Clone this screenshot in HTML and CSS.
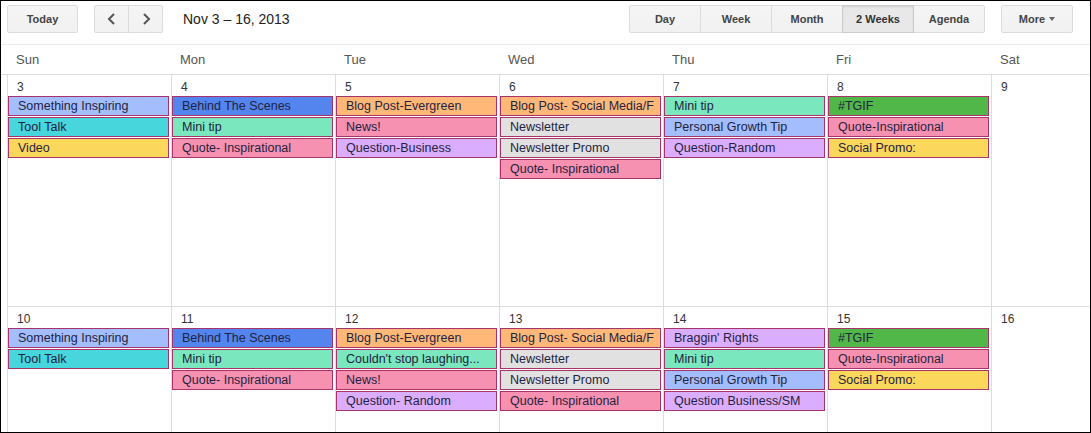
FILE: index.html
```html
<!DOCTYPE html>
<html lang="en">
<head>
    <meta charset="UTF-8">
    <title>Calendar - 2 Weeks</title>
    <link rel="stylesheet" href="styles.css">
</head>
<body>
    <div class="frame">
        <div class="toolbar">
            <button class="btn today">Today</button>
            <div class="btn-group nav">
                <button class="btn">
                    <svg width="10" height="14" viewBox="0 0 10 14"><polyline points="7,2 2,7 7,12" /></svg>
                </button>
                <button class="btn">
                    <svg width="10" height="14" viewBox="0 0 10 14"><polyline points="3,2 8,7 3,12" /></svg>
                </button>
            </div>
            <div class="range">Nov 3 &ndash; 16, 2013</div>
            <div class="spacer"></div>
            <div class="btn-group views">
                <button class="btn">Day</button>
                <button class="btn">Week</button>
                <button class="btn">Month</button>
                <button class="btn active">2 Weeks</button>
                <button class="btn">Agenda</button>
            </div>
            <button class="btn more">More <span class="caret"></span></button>
        </div>

        <div class="dayhead">
            <div>Sun</div><div>Mon</div><div>Tue</div><div>Wed</div><div>Thu</div><div>Fri</div><div>Sat</div>
        </div>

        <div class="week">
            <div class="cell">
                <div class="num">3</div>
                <div class="ev periwinkle">Something Inspiring</div>
                <div class="ev cyan">Tool Talk</div>
                <div class="ev yellow">Video</div>
            </div>
            <div class="cell">
                <div class="num">4</div>
                <div class="ev blue">Behind The Scenes</div>
                <div class="ev mint">Mini tip</div>
                <div class="ev pink">Quote- Inspirational</div>
            </div>
            <div class="cell">
                <div class="num">5</div>
                <div class="ev orange">Blog Post-Evergreen</div>
                <div class="ev pink">News!</div>
                <div class="ev purple">Question-Business</div>
            </div>
            <div class="cell">
                <div class="num">6</div>
                <div class="ev orange">Blog Post- Social Media/F</div>
                <div class="ev gray">Newsletter</div>
                <div class="ev gray">Newsletter Promo</div>
                <div class="ev pink">Quote- Inspirational</div>
            </div>
            <div class="cell">
                <div class="num">7</div>
                <div class="ev mint">Mini tip</div>
                <div class="ev periwinkle">Personal Growth Tip</div>
                <div class="ev purple">Question-Random</div>
            </div>
            <div class="cell">
                <div class="num">8</div>
                <div class="ev green">#TGIF</div>
                <div class="ev pink">Quote-Inspirational</div>
                <div class="ev yellow">Social Promo:</div>
            </div>
            <div class="cell">
                <div class="num">9</div>
            </div>
        </div>

        <div class="week">
            <div class="cell">
                <div class="num">10</div>
                <div class="ev periwinkle">Something Inspiring</div>
                <div class="ev cyan">Tool Talk</div>
            </div>
            <div class="cell">
                <div class="num">11</div>
                <div class="ev blue">Behind The Scenes</div>
                <div class="ev mint">Mini tip</div>
                <div class="ev pink">Quote- Inspirational</div>
            </div>
            <div class="cell">
                <div class="num">12</div>
                <div class="ev orange">Blog Post-Evergreen</div>
                <div class="ev mint">Couldn't stop laughing...</div>
                <div class="ev pink">News!</div>
                <div class="ev purple">Question- Random</div>
            </div>
            <div class="cell">
                <div class="num">13</div>
                <div class="ev orange">Blog Post- Social Media/F</div>
                <div class="ev gray">Newsletter</div>
                <div class="ev gray">Newsletter Promo</div>
                <div class="ev pink">Quote- Inspirational</div>
            </div>
            <div class="cell">
                <div class="num">14</div>
                <div class="ev purple">Braggin' Rights</div>
                <div class="ev mint">Mini tip</div>
                <div class="ev periwinkle">Personal Growth Tip</div>
                <div class="ev purple">Question Business/SM</div>
            </div>
            <div class="cell">
                <div class="num">15</div>
                <div class="ev green">#TGIF</div>
                <div class="ev pink">Quote-Inspirational</div>
                <div class="ev yellow">Social Promo:</div>
            </div>
            <div class="cell">
                <div class="num">16</div>
            </div>
        </div>
    </div>
</body>
</html>
```

FILE: styles.css
```css
body {
    margin: 0;
    font-family: "Liberation Sans", Arial, sans-serif;
    background-color: #fff;
    color: #222;
}

.frame {
    width: 1091px;
    height: 433px;
    box-sizing: border-box;
    border: 1px solid #000;
    overflow: hidden;
}

/* top bar */
.toolbar {
    display: flex;
    align-items: flex-start;
    height: 43px;
    padding: 4px 17px 0 6px;
    box-sizing: border-box;
}

.btn {
    height: 28px;
    padding: 0;
    border: 1px solid #dcdcdc;
    border-radius: 2px;
    background: linear-gradient(#f5f5f5, #f1f1f1);
    font-family: "Liberation Sans", Arial, sans-serif;
    font-size: 11px;
    font-weight: bold;
    color: #444;
    display: flex;
    align-items: center;
    justify-content: center;
}

.today {
    width: 71px;
}

.btn-group {
    display: flex;
}

.btn-group .btn {
    border-radius: 0;
    margin-left: -1px;
}

.btn-group .btn:first-child {
    border-radius: 2px 0 0 2px;
    margin-left: 0;
}

.btn-group .btn:last-child {
    border-radius: 0 2px 2px 0;
}

.nav {
    margin-left: 16px;
}

.nav .btn {
    width: 35px;
}

.nav svg polyline {
    fill: none;
    stroke: #555;
    stroke-width: 2;
}

.range {
    margin-left: 20px;
    font-size: 14px;
    line-height: 28px;
    color: #222;
}

.spacer {
    flex: 1;
}

.views .btn {
    width: 72px;
}

.views .btn.active {
    background: #e8e8e8;
    border-color: #ccc;
    color: #333;
    box-shadow: inset 0 1px 2px rgba(0, 0, 0, 0.1);
    position: relative;
}

.more {
    width: 72px;
    margin-left: 16px;
}

.caret {
    display: inline-block;
    margin-left: 4px;
    border-left: 3px solid transparent;
    border-right: 3px solid transparent;
    border-top: 4px solid #666;
}

/* grid */
.dayhead,
.week {
    display: grid;
    grid-template-columns: repeat(7, 164px);
    margin-left: 6px;
}

.dayhead {
    height: 31px;
    border-top: 1px solid #ebebeb;
    border-bottom: 1px solid #ddd;
    box-sizing: border-box;
    margin-left: 0;
    padding-left: 6px;
    width: 1200px;
}

.dayhead div {
    padding-left: 9px;
    font-size: 13px;
    line-height: 30px;
    color: #555;
}

.week {
    height: 231px;
    border-bottom: 1px solid #ddd;
}

.cell {
    border-left: 1px solid #ddd;
    padding-right: 2px;
    min-width: 0;
}

.num {
    height: 21px;
    line-height: 24px;
    padding-left: 9px;
    font-size: 12px;
    color: #333;
}

.ev {
    height: 20px;
    box-sizing: border-box;
    margin-bottom: 1px;
    padding-left: 9px;
    border: 1px solid #a8336a;
    font-size: 12.5px;
    line-height: 18px;
    color: #1f2340;
    white-space: nowrap;
    overflow: hidden;
}

.periwinkle { background-color: #a4bdfc; }
.cyan { background-color: #46d6db; }
.yellow { background-color: #fbd75b; }
.blue { background-color: #5484ed; }
.mint { background-color: #7ae7bf; }
.pink { background-color: #f691b2; }
.orange { background-color: #ffb878; }
.purple { background-color: #dbadff; }
.gray { background-color: #e1e1e1; }
.green { background-color: #51b749; }
```
